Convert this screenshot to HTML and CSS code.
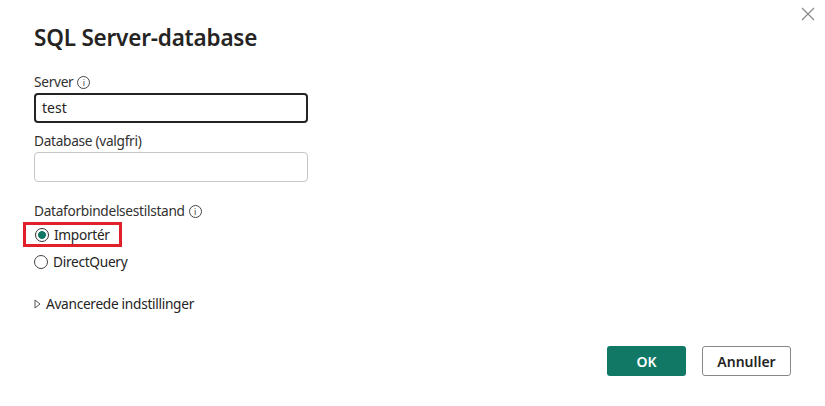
FILE: index.html
```html
<!DOCTYPE html>
<html lang="da">
<head>
<meta charset="utf-8">
<title>SQL Server-database</title>
<link rel="stylesheet" href="styles.css">
</head>
<body>
<div class="dialog">
  <button class="close" aria-label="Luk">
    <svg width="14" height="14" viewBox="0 0 14 14"><path d="M1 1L13 13M13 1L1 13" stroke="#8a8a8a" stroke-width="1.2" fill="none"/></svg>
  </button>
  <h1 class="title">SQL Server-database</h1>
  <div class="field">
    <label class="label">Server <span class="info">i</span></label>
    <div class="input active">test</div>
  </div>
  <div class="field">
    <label class="label">Database (valgfri)</label>
    <div class="input"></div>
  </div>
  <div class="group">
    <div class="label">Dataforbindelsestilstand <span class="info">i</span></div>
    <div class="radio-row highlight">
      <span class="radio checked"></span><span class="rtext">Importér</span>
    </div>
    <div class="radio-row">
      <span class="radio"></span><span class="rtext">DirectQuery</span>
    </div>
  </div>
  <div class="advanced">
    <svg class="caret" width="7" height="10" viewBox="0 0 7 10"><path d="M1 1L6 5L1 9Z" fill="none" stroke="#555" stroke-width="1"/></svg>
    <span>Avancerede indstillinger</span>
  </div>
  <div class="footer">
    <button class="btn primary">OK</button>
    <button class="btn secondary">Annuller</button>
  </div>
</div>
</body>
</html>
```
FILE: styles.css
```css
html, body {
  margin: 0;
  padding: 0;
  background: #ffffff;
}
body {
  font-family: "Noto Sans", "Open Sans", sans-serif;
  color: #252423;
  width: 825px;
  height: 406px;
  overflow: hidden;
}
.dialog {
  position: relative;
  padding: 22px 0 0 34px;
  height: 384px;
  box-sizing: content-box;
}
.close {
  position: absolute;
  top: 7px;
  right: 10px;
  border: none;
  background: none;
  padding: 0;
  width: 14px;
  height: 14px;
}
.title {
  margin: 0;
  font-size: 22.5px;
  font-weight: 600;
  line-height: 32px;
  color: #252423;
  letter-spacing: -0.2px;
}
.field {
  width: 274px;
}
.title + .field {
  margin-top: 18px;
}
.label {
  display: flex;
  align-items: center;
  gap: 4px;
  font-size: 13.7px;
  line-height: 20px;
  color: #323130;
  letter-spacing: -0.3px;
}
.info {
  display: inline-flex;
  align-items: center;
  justify-content: center;
  width: 11px;
  height: 11px;
  border: 1px solid #444;
  border-radius: 50%;
  font-size: 9px;
  line-height: 1;
  letter-spacing: 0;
  color: #444;
}
.input {
  box-sizing: border-box;
  margin-top: 1px;
  height: 30px;
  border: 1px solid #c8c6c4;
  border-radius: 4px;
  padding: 0 7px;
  font-size: 14px;
  line-height: 28px;
  color: #252423;
}
.input.active {
  border: 2px solid #252423;
  line-height: 26px;
  padding: 0 6px;
}
.field + .field {
  margin-top: 8px;
}
.group {
  margin-top: 19px;
}
.radio-row {
  display: flex;
  align-items: center;
  gap: 5px;
  height: 25px;
  font-size: 13.7px;
  letter-spacing: -0.3px;
  color: #252423;
}
.radio-row.highlight {
  width: 99px;
  box-sizing: border-box;
  margin-left: -11px;
  padding-left: 9px;
  border: 3px solid #e0202b;
  margin-top: 1px;
}
.radio-row + .radio-row {
  margin-top: 2px;
}
.radio {
  box-sizing: border-box;
  width: 14px;
  height: 14px;
  border: 1px solid #444;
  border-radius: 50%;
  background: #fff;
}
.radio.checked {
  border-color: #323130;
  background: radial-gradient(circle, #117865 0 3.6px, #fff 4.2px);
}
.advanced {
  margin-top: 20px;
  display: flex;
  align-items: center;
  gap: 5px;
  font-size: 13.7px;
  letter-spacing: -0.3px;
  color: #252423;
  line-height: 20px;
}
.footer {
  position: absolute;
  right: 34px;
  bottom: 30px;
  display: flex;
  gap: 16px;
}
.btn {
  box-sizing: border-box;
  height: 30px;
  border-radius: 3px;
  font-family: "Noto Sans", sans-serif;
  font-size: 14px;
  font-weight: 600;
  cursor: pointer;
}
.primary {
  width: 79px;
  background: #117865;
  color: #fff;
  border: none;
}
.secondary {
  width: 89px;
  background: #fff;
  color: #252423;
  border: 1px solid #8a8886;
}
```
